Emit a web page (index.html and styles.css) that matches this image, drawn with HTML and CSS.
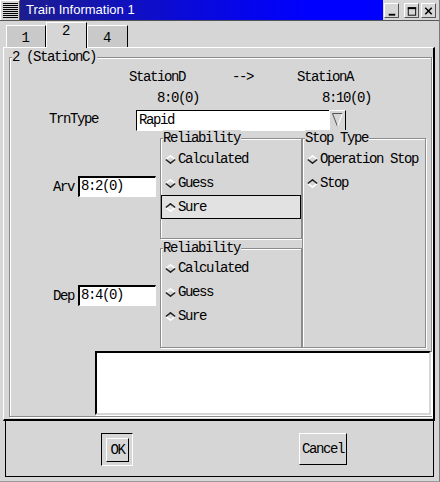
FILE: index.html
```html
<!DOCTYPE html>
<html>
<head>
<meta charset="utf-8">
<title>Train Information 1</title>
<link rel="stylesheet" href="styles.css">
</head>
<body>
<div class="window">
  <div class="titlebar">
    <div class="sysmenu"><div class="sysmenu-lines"></div></div>
    <div class="caption">Train Information 1</div>
    <div class="wm-buttons">
      <div class="wm-btn wm-min"><svg width="14" height="14" viewBox="0 0 14 14"><rect x="4" y="10" width="7" height="2" fill="#000"/></svg></div>
      <div class="wm-btn wm-max"><svg width="14" height="14" viewBox="0 0 14 14"><rect x="3.5" y="3.5" width="8" height="8" fill="none" stroke="#000"/><rect x="3" y="3" width="9" height="2" fill="#000"/></svg></div>
      <div class="wm-btn wm-close"><svg width="14" height="14" viewBox="0 0 14 14"><path d="M3.5 3.5 L10.5 10.5 M10.5 3.5 L3.5 10.5" stroke="#000" stroke-width="1.7" fill="none"/></svg></div>
    </div>
  </div>
  <div class="client">
    <div class="tabs">
      <div class="tab">1</div>
      <div class="tab active">2</div>
      <div class="tab">4</div>
    </div>
    <div class="page">
      <fieldset class="group main">
        <legend>2 (StationC)</legend>
        <div class="route">
          <span class="st-from">StationD</span><span class="arrow">--&gt;</span><span class="st-to">StationA</span>
        </div>
        <div class="times">
          <span class="t-from">8:0(0)</span><span class="t-to">8:10(0)</span>
        </div>
        <div class="trn-row">
          <span class="trn-label">TrnType</span>
          <div class="combo">
            <div class="combo-entry">Rapid</div>
            <div class="combo-btn"><svg width="11" height="14" viewBox="0 0 11 14"><path d="M0.5 0.5 L10.5 0.5" stroke="#555" fill="none"/><path d="M0.5 0.5 L5.5 13.5" stroke="#555" fill="none"/><path d="M10.5 0.5 L5.5 13.5" stroke="#fff" fill="none"/></svg></div>
          </div>
        </div>
        <div class="mid">
          <div class="times-col">
            <div class="time-cell arv">
              <span class="lbl">Arv</span>
              <div class="entry">8:2(0)</div>
            </div>
            <div class="time-cell dep">
              <span class="lbl">Dep</span>
              <div class="entry">8:4(0)</div>
            </div>
          </div>
          <div class="rel-col">
            <fieldset class="group rel rel1">
              <legend>Reliability</legend>
              <div class="radio"><svg class="dia" width="11" height="9" viewBox="0 0 11 9"><path d="M0.8 4.5 L5.5 0.8 L10.2 4.5" stroke="#fff" stroke-width="1.5" fill="none"/><path d="M0.8 4.5 L5.5 8.2 L10.2 4.5" stroke="#222" stroke-width="1.5" fill="none"/></svg><span>Calculated</span></div>
              <div class="radio"><svg class="dia" width="11" height="9" viewBox="0 0 11 9"><path d="M0.8 4.5 L5.5 0.8 L10.2 4.5" stroke="#fff" stroke-width="1.5" fill="none"/><path d="M0.8 4.5 L5.5 8.2 L10.2 4.5" stroke="#222" stroke-width="1.5" fill="none"/></svg><span>Guess</span></div>
              <div class="radio focus"><svg class="dia" width="11" height="9" viewBox="0 0 11 9"><path d="M0.8 4.5 L5.5 8.2 L10.2 4.5" stroke="#fff" stroke-width="1.5" fill="none"/><path d="M0.8 4.5 L5.5 0.8 L10.2 4.5" stroke="#222" stroke-width="1.5" fill="none"/></svg><span>Sure</span></div>
            </fieldset>
            <fieldset class="group rel rel2">
              <legend>Reliability</legend>
              <div class="radio"><svg class="dia" width="11" height="9" viewBox="0 0 11 9"><path d="M0.8 4.5 L5.5 0.8 L10.2 4.5" stroke="#fff" stroke-width="1.5" fill="none"/><path d="M0.8 4.5 L5.5 8.2 L10.2 4.5" stroke="#222" stroke-width="1.5" fill="none"/></svg><span>Calculated</span></div>
              <div class="radio"><svg class="dia" width="11" height="9" viewBox="0 0 11 9"><path d="M0.8 4.5 L5.5 0.8 L10.2 4.5" stroke="#fff" stroke-width="1.5" fill="none"/><path d="M0.8 4.5 L5.5 8.2 L10.2 4.5" stroke="#222" stroke-width="1.5" fill="none"/></svg><span>Guess</span></div>
              <div class="radio"><svg class="dia" width="11" height="9" viewBox="0 0 11 9"><path d="M0.8 4.5 L5.5 8.2 L10.2 4.5" stroke="#fff" stroke-width="1.5" fill="none"/><path d="M0.8 4.5 L5.5 0.8 L10.2 4.5" stroke="#222" stroke-width="1.5" fill="none"/></svg><span>Sure</span></div>
            </fieldset>
          </div>
          <fieldset class="group stop">
            <legend>Stop Type</legend>
            <div class="radio"><svg class="dia" width="11" height="9" viewBox="0 0 11 9"><path d="M0.8 4.5 L5.5 0.8 L10.2 4.5" stroke="#fff" stroke-width="1.5" fill="none"/><path d="M0.8 4.5 L5.5 8.2 L10.2 4.5" stroke="#222" stroke-width="1.5" fill="none"/></svg><span>Operation Stop</span></div>
            <div class="radio"><svg class="dia" width="11" height="9" viewBox="0 0 11 9"><path d="M0.8 4.5 L5.5 8.2 L10.2 4.5" stroke="#fff" stroke-width="1.5" fill="none"/><path d="M0.8 4.5 L5.5 0.8 L10.2 4.5" stroke="#222" stroke-width="1.5" fill="none"/></svg><span>Stop</span></div>
          </fieldset>
        </div>
        <div class="memo"></div>
      </fieldset>
    </div>
    <div class="buttonbar">
      <div class="default-ring"><div class="btn ok">OK</div></div>
      <div class="btn cancel">Cancel</div>
    </div>
  </div>
</div>
</body>
</html>
```

FILE: styles.css
```css
* { box-sizing: border-box; }
html, body { margin: 0; padding: 0; }
body {
  width: 440px;
  height: 482px;
  overflow: hidden;
  background: #d6d6d6;
  font-family: "Liberation Mono", "DejaVu Sans Mono", monospace;
  font-size: 14px;
  letter-spacing: -1.4px;
  line-height: 16px;
  color: #000;
}
.window {
  width: 440px;
  height: 482px;
  display: flex;
  flex-direction: column;
  background: #d6d6d6;
  border-right: 1px solid #7a7a7a;
  border-bottom: 1px solid #9a9a9a;
}

/* title bar */
.titlebar {
  height: 21px;
  display: flex;
  border-bottom: 1px solid #555;
}
.sysmenu {
  width: 20px;
  height: 20px;
  background: #d6d6d6;
  border-top: 1px solid #fff;
  border-left: 1px solid #fff;
  border-right: 1px solid #555;
  padding: 2px 2px;
}
.sysmenu-lines {
  width: 15px;
  height: 15px;
  background: repeating-linear-gradient(to bottom, #000 0 1px, #d6d6d6 1px 2px);
}
.caption {
  flex: 1;
  background: linear-gradient(to right, #1d1d8e 0%, #0a0ad8 45%, #0000ff 80%);
  color: #fff;
  font-family: "Liberation Sans", "DejaVu Sans", sans-serif;
  font-size: 13px;
  letter-spacing: 0;
  line-height: 20px;
  padding-left: 6px;
}
.wm-buttons {
  width: 56px;
  display: flex;
  padding-top: 3px;
  padding-left: 1px;
  background: #d6d6d6;
}
.wm-btn {
  width: 15px;
  height: 15px;
  border-top: 1px solid #fff;
  border-left: 1px solid #fff;
  border-right: 1px solid #555;
  border-bottom: 1px solid #555;
  display: flex;
  align-items: center;
  justify-content: center;
}
.wm-max { margin-left: 5px; }
.wm-close { margin-left: 2px; }

/* client */
.client {
  margin-left: 3px;
  width: 432px;
  display: flex;
  flex-direction: column;
}
.tabs {
  height: 26px;
  display: flex;
  align-items: flex-end;
  padding-left: 3px;
  position: relative;
  z-index: 1;
}
.tab {
  width: 41px;
  height: 22px;
  background: #c9c9c9;
  border-top: 1px solid #fff;
  border-left: 1px solid #fff;
  border-right: 1px solid #000;
  text-align: center;
  padding-top: 4px;
  padding-right: 2px;
}
.tab:first-child { width: 40px; }
.tab.active {
  height: 26px;
  background: #d6d6d6;
  margin-bottom: -1px;
  padding-top: 0px;
}

.page {
  height: 374px;
  border-top: 1px solid #fff;
  border-left: 1px solid #fff;
  border-right: 2px solid #000;
  border-bottom: 2px solid #000;
  padding-left: 5px;
  padding-top: 1px;
}

/* group frames */
fieldset.group {
  margin: 0;
  padding: 0;
  min-width: 0;
  min-inline-size: 0;
  border: 1px solid #8c8c8c;
  box-shadow: inset 1px 1px 0 #fff, 1px 1px 0 #fff;
}
fieldset.group > legend {
  padding: 0 1px 0 0;
  margin-left: 2px;
  line-height: 16px;
  background: #d6d6d6;
}
.main {
  width: 423px;
  height: 368px;
}
.route {
  display: flex;
  margin-top: 4px;
  padding-left: 119px;
}
.arrow { margin-left: 47px; }
.st-to { margin-left: 44px; }
.times {
  display: flex;
  margin-top: 5px;
  padding-left: 147px;
}
.t-to { margin-left: 123px; }

.trn-row {
  display: flex;
  margin-top: 4px;
  height: 20px;
}
.trn-label {
  margin-left: 39px;
  margin-top: 1px;
  width: 87px;
}
.combo {
  display: flex;
  width: 210px;
  height: 21px;
}
.combo-entry {
  width: 193px;
  background: #fff;
  border-top: 1px solid #000;
  border-left: 1px solid #000;
  border-bottom: 1px solid #fff;
  padding-left: 2px;
  padding-top: 1px;
}
.combo-btn {
  width: 17px;
  background: #d6d6d6;
  border-top: 1px solid #fff;
  border-left: 1px solid #fff;
  border-right: 1px solid #000;
  border-bottom: 1px solid #000;
  display: flex;
  justify-content: center;
  padding-top: 2px;
}

.mid {
  display: flex;
  height: 218px;
}
.times-col {
  width: 150px;
  flex: none;
  display: flex;
  flex-direction: column;
}
.time-cell {
  display: flex;
  align-items: center;
  justify-content: flex-end;
  padding-right: 4px;
}
.arv { margin-top: 46px; }
.dep { margin-top: 88px; }
.lbl { margin-right: 4px; }
.entry {
  width: 78px;
  height: 21px;
  background: #fff;
  border-top: 2px solid #000;
  border-left: 2px solid #000;
  border-bottom: 1px solid #fff;
  border-right: 1px solid #fff;
  padding-left: 1px;
}
.rel-col {
  width: 142px;
  flex: none;
  display: flex;
  flex-direction: column;
  gap: 1px;
}
.rel { width: 142px; }
.rel1 { height: 109px; }
.rel2 { height: 108px; }
.stop {
  width: 124px;
  flex: none;
  height: 218px;
  margin-left: 3px;
}
.rel1 .radio:first-of-type, .stop .radio:first-of-type { margin-top: 1px; }

.radio {
  display: flex;
  align-items: center;
  height: 24px;
  border: 1px solid transparent;
  padding-left: 3px;
}
.radio .dia { margin-right: 2px; flex: none; }
.radio.focus {
  border-color: #000;
  background: #e2e2e2;
}

.memo {
  margin-top: 3px;
  margin-left: 85px;
  width: 336px;
  height: 64px;
  background: #fff;
  border-top: 2px solid #000;
  border-left: 2px solid #000;
  border-right: 2px solid #d6d6d6;
  border-bottom: 2px solid #d6d6d6;
  box-shadow: 1px 1px 0 #fff;
}

/* buttons */
.buttonbar {
  height: 56px;
  margin-left: 2px;
  margin-right: 1px;
  border-left: 1px solid #000;
  border-bottom: 1px solid #000;
  border-right: 1px solid #000;
  display: flex;
  align-items: flex-start;
  padding-top: 12px;
}
.default-ring {
  margin-left: 95px;
  width: 32px;
  height: 33px;
  border-top: 1px solid #000;
  border-left: 1px solid #000;
  border-right: 1px solid #fff;
  border-bottom: 1px solid #fff;
  padding: 4px 0 0 4px;
}
.btn {
  background: #d6d6d6;
  border-top: 1px solid #fff;
  border-left: 1px solid #fff;
  border-right: 1px solid #000;
  border-bottom: 1px solid #000;
  text-align: center;
}
.ok {
  width: 23px;
  height: 24px;
  padding-top: 3px;
}
.cancel {
  margin-left: 166px;
  width: 48px;
  height: 32px;
  padding-top: 7px;
}
```
